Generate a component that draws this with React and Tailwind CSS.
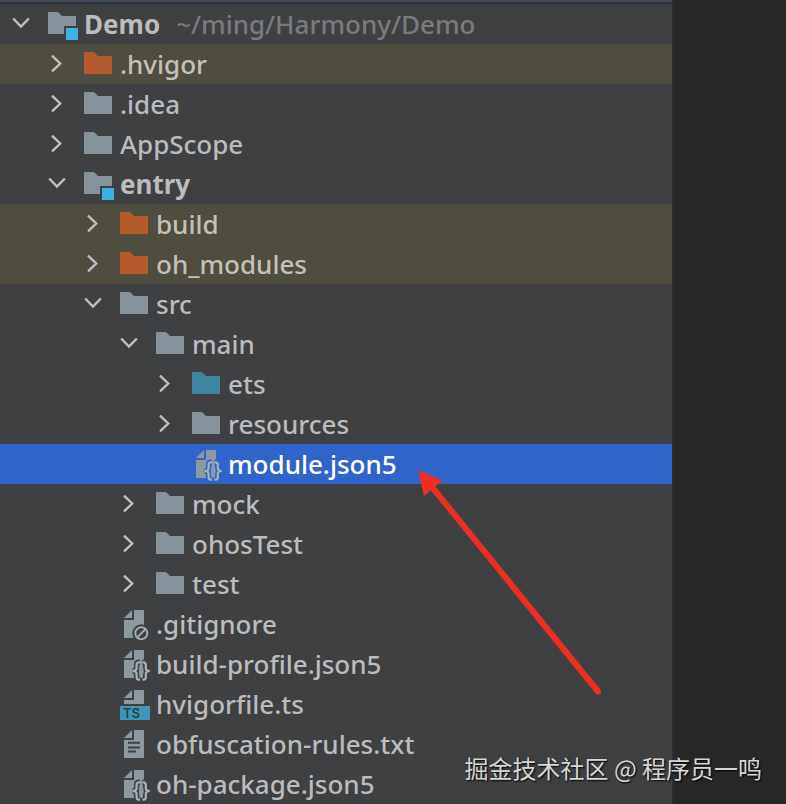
/**
 * Project tree - tool window listing the files of the Demo project
 *
 * Each row is a flat entry with its depth, so the row background
 * always spans the full width of the panel.
 */

const INDENT = ['pl-0', 'pl-9', 'pl-18', 'pl-27', 'pl-36'];

const ROW_STYLES = {
    normal: { bg: 'bg-[#3e4042]', cutout: 'text-[#3e4042]', label: 'text-[#bbbcbe]' },
    excluded: { bg: 'bg-[#4f4c40]', cutout: 'text-[#4f4c40]', label: 'text-[#c4c1b8]' },
    selected: { bg: 'bg-[#2f65ca]', cutout: 'text-[#2f65ca]', label: 'text-white' },
};

const ROWS = [
    { name: 'Demo', path: '~/ming/Harmony/Demo', depth: 0, icon: 'module', open: true },
    { name: '.hvigor', depth: 1, icon: 'orange', open: false, state: 'excluded' },
    { name: '.idea', depth: 1, icon: 'folder', open: false },
    { name: 'AppScope', depth: 1, icon: 'folder', open: false },
    { name: 'entry', depth: 1, icon: 'module', open: true },
    { name: 'build', depth: 2, icon: 'orange', open: false, state: 'excluded' },
    { name: 'oh_modules', depth: 2, icon: 'orange', open: false, state: 'excluded' },
    { name: 'src', depth: 2, icon: 'folder', open: true },
    { name: 'main', depth: 3, icon: 'folder', open: true },
    { name: 'ets', depth: 4, icon: 'source', open: false },
    { name: 'resources', depth: 4, icon: 'folder', open: false },
    { name: 'module.json5', depth: 4, icon: 'json', state: 'selected' },
    { name: 'mock', depth: 3, icon: 'folder', open: false },
    { name: 'ohosTest', depth: 3, icon: 'folder', open: false },
    { name: 'test', depth: 3, icon: 'folder', open: false },
    { name: '.gitignore', depth: 2, icon: 'ignore' },
    { name: 'build-profile.json5', depth: 2, icon: 'json' },
    { name: 'hvigorfile.ts', depth: 2, icon: 'ts' },
    { name: 'obfuscation-rules.txt', depth: 2, icon: 'text' },
    { name: 'oh-package.json5', depth: 2, icon: 'json' },
];

function Chevron({ open }) {
    return (
        <svg viewBox="0 0 48 40" className="w-12 h-10 shrink-0" fill="none" stroke="#bfc0c2" strokeWidth="2.4" aria-hidden="true">
            {open === true && <path d="M13.2 14.5 L21 22.6 L28.8 14.5" />}
            {open === false && <path d="M16 11.6 L24.2 19.5 L16 27.4" />}
        </svg>
    );
}

const FOLDER_COLORS = { folder: '#87939a', module: '#87939a', orange: '#b45a2b', source: '#3e86a0' };

const BRACES =
    'M20 18.3 H19 Q16.6 18.3 16.6 20.8 V24 Q16.6 27 12.6 27 Q16.6 27 16.6 30 V33.2 Q16.6 35.7 19 35.7 H20 ' +
    'M22.4 18.3 H23.4 Q25.8 18.3 25.8 20.8 V24 Q25.8 27 29.8 27 Q25.8 27 25.8 30 V33.2 Q25.8 35.7 23.4 35.7 H22.4';

function Page() {
    return (
        <g fill="#8c999f">
            <path d="M4 14 L12 6 V14 Z" />
            <path d="M14 6 H24 V34 H4 V16 H14 Z" />
        </g>
    );
}

// currentColor is the row background, used to cut badges out of the page
function Icon({ type, cutout }) {
    return (
        <svg viewBox="0 0 36 40" className={`w-9 h-10 shrink-0 ${cutout}`} aria-hidden="true">
            {FOLDER_COLORS[type] ? (
                <path d="M0 8 H9 Q10 8 10.8 8.8 L14 12 H28 V30 H0 Z" fill={FOLDER_COLORS[type]} />
            ) : (
                <Page />
            )}
            {type === 'module' && (
                <>
                    <path d="M16 22 H30 V36 H16 Z" fill="currentColor" />
                    <path d="M18 24 H30 V36 H18 Z" fill="#40b2e0" />
                </>
            )}
            {type === 'ignore' && (
                <>
                    <circle cx="21.3" cy="29.3" r="9" fill="currentColor" />
                    <g fill="none" stroke="#a3abb0" strokeWidth="2">
                        <circle cx="21.3" cy="29.3" r="6" />
                        <path d="M17 33.6 L25.6 25" />
                    </g>
                </>
            )}
            {type === 'json' && (
                <>
                    <path d={BRACES} fill="none" stroke="currentColor" strokeWidth="5.5" />
                    <ellipse cx="21.2" cy="27" rx="2.2" ry="6" fill="#8c999f" />
                    <path d={BRACES} fill="none" stroke="#a9b1b5" strokeWidth="2.2" />
                </>
            )}
            {type === 'ts' && (
                <>
                    <path d="M0 20 H30 V36 H0 Z" fill="currentColor" />
                    <path d="M0 22 H30 V36 H0 Z" fill="#3f96b8" />
                    <text x="3" y="34" fontFamily="Inter, sans-serif" fontSize="13" fontWeight="600" fill="#25404c">TS</text>
                </>
            )}
            {type === 'text' && (
                <path d="M8 18.8 H20 M8 23.4 H20 M8 27.6 H16" stroke="currentColor" strokeWidth="2" />
            )}
        </svg>
    );
}

function TreeRow({ name, path, depth, icon, open, state = 'normal' }) {
    const style = ROW_STYLES[state];
    return (
        <li
            role="treeitem"
            aria-level={depth + 1}
            aria-expanded={open}
            aria-selected={state === 'selected'}
            className={`flex items-center h-10 whitespace-nowrap ${INDENT[depth]} ${style.bg}`}
        >
            <Chevron open={open} />
            <Icon type={icon} cutout={style.cutout} />
            <span className={`${style.label} ${icon === 'module' ? 'font-bold' : 'font-medium'}`}>{name}</span>
            {path && <span className="ml-4 font-medium text-[#7a7b7d]">{path}</span>}
        </li>
    );
}

export default function App() {
    return (
        <div className="relative flex min-h-screen overflow-hidden bg-[#282828] font-['Noto_Sans',sans-serif] text-[26px] leading-10">
            {/* Project panel */}
            <main className="flex-1 min-w-0 bg-[#3e4042] border-t-2 border-[#3d4b5c]">
                <div className="h-0.5 bg-[#323335]" />
                <ul role="tree" aria-label="Project">
                    {ROWS.map((row) => (
                        <TreeRow key={row.name} {...row} />
                    ))}
                </ul>
            </main>

            {/* Editor edge */}
            <aside className="w-[114px] shrink-0 border-l-2 border-[#2e2e2e]" />

            {/* Arrow pointing at the selected file */}
            <svg viewBox="0 0 184 226" className="absolute left-[418px] top-[470px] w-[184px] h-[226px]" aria-hidden="true">
                <path d="M14 17 L180 221.5" stroke="#ee2d24" strokeWidth="6" strokeLinecap="round" />
                <path d="M0 0 L24.5 10.5 L6 26 Z" fill="#ee2d24" />
            </svg>

            {/* Watermark */}
            <p className="absolute right-6 bottom-4 font-['Noto_Sans_CJK_SC',sans-serif] text-2xl leading-10 text-[#d6d6d6] [text-shadow:1px_1px_2px_#000]">
                掘金技术社区 @ 程序员一鸣
            </p>
        </div>
    );
}
